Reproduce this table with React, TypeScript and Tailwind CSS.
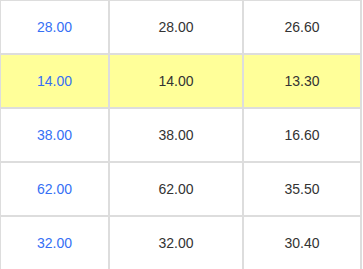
const rows = [
  { a: "28.00", b: "28.00", c: "26.60", hi: false },
  { a: "14.00", b: "14.00", c: "13.30", hi: true },
  { a: "38.00", b: "38.00", c: "16.60", hi: false },
  { a: "62.00", b: "62.00", c: "35.50", hi: false },
  { a: "32.00", b: "32.00", c: "30.40", hi: false },
];

export default function App() {
  return (
    <div className="w-[363px] h-[269px] overflow-hidden bg-white">
      <div className="-mt-px -ml-px font-['Liberation_Sans',Arial,sans-serif] text-[14px] text-[#333]">
        {rows.map((r, i) => (
          <div
            key={i}
            className={`flex h-[54px] w-[363px] border-t-2 border-l-2 border-[#ddd] ${
              r.hi ? "bg-[#ffff99]" : "bg-white"
            }`}
          >
            <div className="w-[109px] flex items-center justify-center border-r-2 border-[#ddd] text-[#3670f5]">
              {r.a}
            </div>
            <div className="w-[134px] flex items-center justify-center border-r-2 border-[#ddd]">
              {r.b}
            </div>
            <div className="w-[118px] flex items-center justify-center border-r-2 border-[#ddd]">
              {r.c}
            </div>
          </div>
        ))}
      </div>
    </div>
  );
}
